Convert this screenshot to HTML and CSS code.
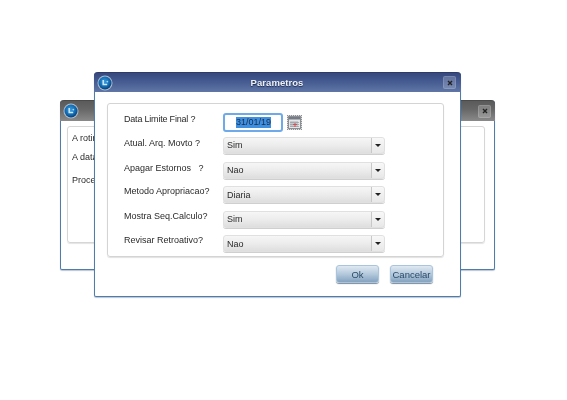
FILE: index.html
```html
<!DOCTYPE html>
<html lang="pt">
<head>
<meta charset="utf-8">
<title>Parametros</title>
<link rel="stylesheet" href="styles.css">
</head>
<body>
<div class="desktop">
  <section class="window window-back">
    <header class="titlebar titlebar-gray">
      <svg class="logo" viewBox="0 0 16 16"><use href="#globe"/></svg>
      <span class="close"><svg viewBox="0 0 8 8"><path d="M2 2l4 4M6 2l-4 4"/></svg></span>
    </header>
    <div class="back-body">
      <div class="back-panel">
        <p class="msg msg-1">A rotina de</p>
        <p class="msg msg-2">A data limite</p>
        <p class="msg msg-3">Processar?</p>
      </div>
    </div>
  </section>

  <section class="window window-front">
    <header class="titlebar titlebar-blue">
      <svg class="logo" viewBox="0 0 16 16">
        <defs>
          <radialGradient id="orb" cx="45%" cy="40%" r="60%">
            <stop offset="0" stop-color="#3a9ee0"/>
            <stop offset="0.7" stop-color="#0f67ad"/>
            <stop offset="1" stop-color="#0a3a70"/>
          </radialGradient>
          <g id="globe">
            <circle cx="8" cy="8" r="7.5" fill="#aebccd"/>
            <circle cx="8" cy="8" r="6.5" fill="url(#orb)"/>
            <path d="M6.2 5v4.4h4" fill="none" stroke="#cfe8f8" stroke-width="1.5"/>
            <circle cx="10.3" cy="6.6" r="0.9" fill="#a8d6f2"/>
          </g>
        </defs>
        <use href="#globe"/>
      </svg>
      <h1 class="title">Parametros</h1>
      <span class="close"><svg viewBox="0 0 8 8"><path d="M2 2l4 4M6 2l-4 4"/></svg></span>
    </header>
    <div class="body">
      <form class="panel">
        <label class="label label-tight">Data Limite Final ?</label>
        <div class="date-row">
          <span class="date-input"><span class="selected">31/01/19</span></span>
          <span class="cal">
            <svg viewBox="0 0 13 13">
              <rect x="0.5" y="0.5" width="12" height="12" fill="#e4e6e8" stroke="#8c9096"/>
              <rect x="1" y="1" width="11" height="2.5" fill="#767c86"/>
              <path d="M3 5v6M5 5v6M7 5v6M9 5v6M2 6.5h9M2 8.5h9M2 10.5h9" stroke="#9aa0a8" stroke-width="0.8"/>
              <path d="M7 7v4M5 8.5h4" stroke="#d9484c" stroke-width="0.9"/>
            </svg>
          </span>
        </div>

        <label class="label">Atual. Arq. Movto ?</label>
        <div class="select"><span class="value">Sim</span><span class="arrow"></span></div>

        <label class="label">Apagar Estornos &nbsp; ?</label>
        <div class="select"><span class="value">Nao</span><span class="arrow"></span></div>

        <label class="label label-up">Metodo Apropriacao?</label>
        <div class="select"><span class="value">Diaria</span><span class="arrow"></span></div>

        <label class="label label-up">Mostra Seq.Calculo?</label>
        <div class="select"><span class="value">Sim</span><span class="arrow"></span></div>

        <label class="label label-up">Revisar Retroativo?</label>
        <div class="select"><span class="value">Nao</span><span class="arrow"></span></div>
      </form>
      <footer class="actions">
        <button type="button" class="btn">Ok</button>
        <button type="button" class="btn">Cancelar</button>
      </footer>
    </div>
  </section>
</div>
</body>
</html>
```

FILE: styles.css
```css
* { box-sizing: border-box; }
html, body { margin: 0; padding: 0; background: #fff; }
body { font-family: "Liberation Sans", Arial, sans-serif; font-size: 9px; color: #2a2a2a; }

.desktop { position: relative; width: 567px; height: 400px; overflow: hidden; filter: blur(0.35px); }

.window {
  position: absolute;
  display: flex;
  flex-direction: column;
  background: #fff;
  border: 1px solid #4f7cab;
  border-top: 0;
  border-radius: 4px 4px 2px 2px;
  box-shadow: 0 1px 1px rgba(60, 90, 130, 0.35);
}
.window-back { left: 60px; top: 100px; width: 435px; height: 170px; }
.window-front { left: 94px; top: 72px; width: 367px; height: 225px; }

.titlebar {
  display: flex;
  align-items: center;
  flex: none;
  margin: 0 -1px;
  border-radius: 4px 4px 0 0;
  position: relative;
}
.titlebar-blue {
  height: 20px;
  padding: 0 5px 0 3px;
  background: linear-gradient(#37497f, #43598f 40%, #5f76a6);
  border-top: 1px solid #2d3b66;
}
.titlebar-gray {
  height: 21px;
  padding: 0 4px 0 3px;
  justify-content: space-between;
  background: linear-gradient(#5a5a5a, #666 40%, #8a8a8a);
  border-top: 1px solid #4a4a4a;
}
.logo { width: 16px; height: 16px; flex: none; }
.title {
  flex: 1;
  margin: 0;
  padding-right: 2px;
  text-align: center;
  font-size: 9.5px;
  font-weight: bold;
  letter-spacing: 0.05px;
  color: #eef0f4;
  text-shadow: 0 1px 1px #1f2c50;
}
.close {
  display: flex;
  align-items: center;
  justify-content: center;
  flex: none;
  width: 13px;
  height: 13px;
  border-radius: 2px;
  background: rgba(255, 255, 255, 0.2);
  border: 1px solid rgba(255, 255, 255, 0.14);
}
.close svg { width: 8px; height: 8px; }
.close path { stroke: #222; stroke-width: 1.4; fill: none; }

.back-body { flex: 1; padding: 5px 9px 26px 6px; }
.back-panel {
  height: 100%;
  border: 1px solid #d6d6d6;
  border-radius: 3px;
  padding: 5px 4px;
  box-shadow: 0 1px 1px #e4e4e4;
}
.msg { margin: 0; line-height: 12px; white-space: nowrap; font-size: 9px; }
.msg-2 { margin-top: 7px; }
.msg-3 { margin-top: 11px; }

.body { flex: 1; display: flex; flex-direction: column; padding: 11px 16px 0 12px; }

.panel {
  display: grid;
  grid-template-columns: 99px 162px;
  grid-template-rows: 16.4px repeat(5, 17px);
  row-gap: 7.6px;
  align-items: start;
  height: 154px;
  padding: 9px 0 0 16px;
  border: 1px solid #d4d4d4;
  border-radius: 3px;
  box-shadow: 0 1px 1px #e2e2e2;
}
.label { line-height: 12px; font-size: 9px; white-space: nowrap; color: #2a2a2a; }
.label-up { margin-top: -1px; }
.label-tight { letter-spacing: -0.2px; }

.date-row { display: flex; align-items: center; gap: 4px; height: 19px; }
.date-input {
  display: flex;
  align-items: center;
  width: 60px;
  height: 19px;
  padding-left: 11px;
  border: 2px solid #6eaaea;
  border-radius: 3px;
  background: #fff;
  font-size: 9px;
}
.selected { background: #3d8fe0; color: #1c2c48; line-height: 11px; }
.cal {
  display: flex;
  align-items: center;
  justify-content: center;
  width: 15px;
  height: 15px;
  border: 1px dotted #8f8f8f;
  background: #dcdfe2;
}
.cal svg { width: 13px; height: 13px; }

.select {
  display: flex;
  align-items: center;
  justify-content: space-between;
  height: 17px;
  border-radius: 3px;
  border: 1px solid #e0e0e0;
  background: linear-gradient(#f6f6f6, #ececec 50%, #dedede);
  box-shadow: 0 1px 0 #cfcfcf;
}
.value { padding-left: 3px; font-size: 9px; color: #2a2a2a; }
.arrow {
  position: relative;
  width: 13px;
  height: 100%;
  flex: none;
  border-left: 1px solid #c8c8c8;
  background: linear-gradient(#f8f8f8, #e8e8e8);
  border-radius: 0 3px 3px 0;
}
.arrow::after {
  content: "";
  position: absolute;
  left: 3px;
  top: 6px;
  border-style: solid;
  border-width: 3.5px 3px 0;
  border-color: #222 transparent transparent;
}

.actions { display: flex; justify-content: flex-end; gap: 11px; padding: 8px 11px 0 0; }
.btn {
  width: 43px;
  height: 18px;
  padding: 0;
  border: 1px solid #a9c4dc;
  border-radius: 3px;
  background: linear-gradient(#dfe9f2, #b4c9dc 50%, #84a3bf);
  box-shadow: 0 1px 1px #7c8a98;
  font-family: "Liberation Sans", Arial, sans-serif;
  font-size: 9.5px;
  color: #2b4a68;
}
```
